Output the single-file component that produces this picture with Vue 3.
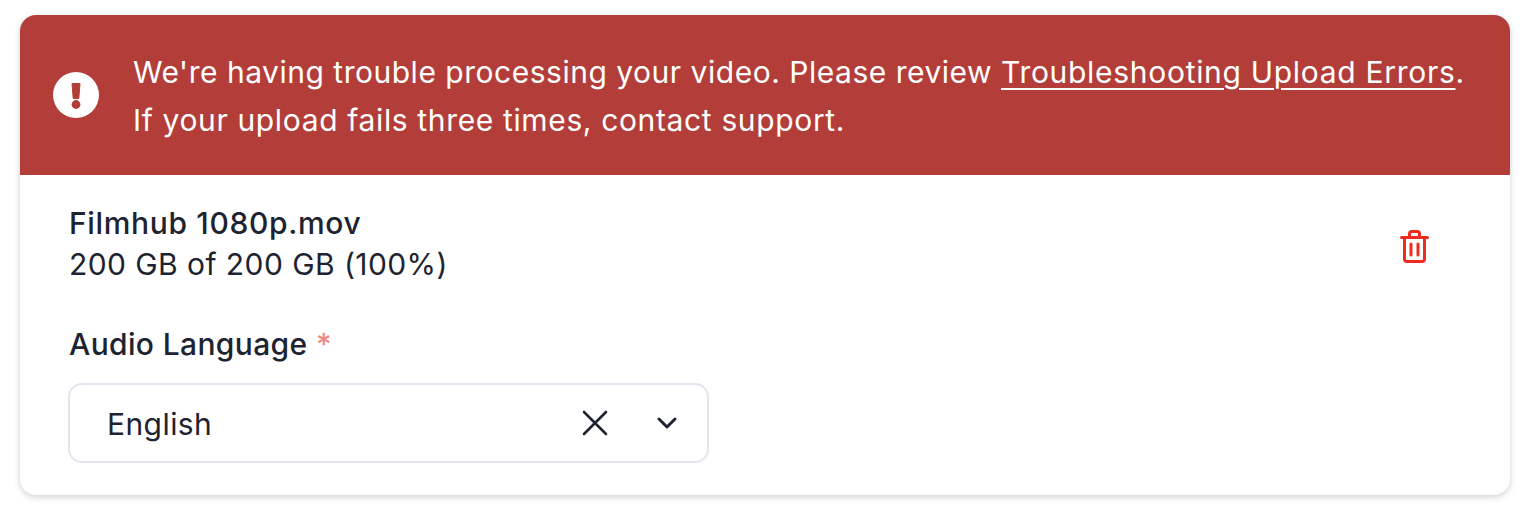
<template>
  <div class="page">
    <div class="card">
      <div class="alert">
        <svg class="alert-icon" viewBox="0 0 46 46">
          <circle cx="23" cy="23" r="23" fill="#fff" />
          <path d="M19 11.5h8l-1.2 15h-5.6z" fill="#b33e39" stroke="#b33e39" stroke-width="1" stroke-linejoin="round" />
          <circle cx="23" cy="32.5" r="4.4" fill="#b33e39" />
        </svg>
        <p class="alert-text">
          We're having trouble processing your video. Please review
          <a href="#" class="alert-link">Troubleshooting Upload Errors</a>.<br />
          <span class="alert-second">If your upload fails three times, contact support.</span>
        </p>
      </div>

      <div class="body">
        <div class="file-row">
          <div class="file-info">
            <div class="file-name">{{ fileName }}</div>
            <div class="file-size">{{ fileSize }}</div>
          </div>
          <button class="delete-btn" aria-label="Delete">
            <svg viewBox="0 0 29 33" width="29" height="33" fill="none" stroke="#ee2c1f" stroke-width="3" stroke-linejoin="round" stroke-linecap="round">
              <path d="M1.500 7.500h26" />
              <path d="M9.500 7.500V4c0-1.500.8-2.500 2.300-2.500h5.400c1.500 0 2.300 1 2.300 2.500v3.500" />
              <path d="M4.500 7.500v21.500c0 1.700.8 2.500 2.500 2.500h15c1.700 0 2.500-.8 2.500-2.500V7.500" />
              <path d="M11 14v11M18 14v11" />
            </svg>
          </button>
        </div>

        <label class="field-label">Audio Language <span class="required">*</span></label>
        <div class="select">
          <span class="select-value">{{ language }}</span>
          <svg class="clear-icon" viewBox="0 0 26 26" width="26" height="26" fill="none" stroke="#1d2330" stroke-width="2.600" stroke-linecap="round">
            <path d="M2 2l22 22M24 2L2 24" />
          </svg>
          <svg class="chevron-icon" viewBox="0 0 20 12" width="20" height="12" fill="none" stroke="#1d2330" stroke-width="3" stroke-linecap="round" stroke-linejoin="round">
            <path d="M2 2l8 8 8-8" />
          </svg>
        </div>
      </div>
    </div>
  </div>
</template>

<script setup>
import { ref } from 'vue'

const fileName = ref('Filmhub 1080p.mov')
const fileSize = ref('200 GB of 200 GB (100%)')
const language = ref('English')
</script>

<style>
html,
body {
  margin: 0;
  background: #fff;
}
</style>

<style scoped>
.page {
  box-sizing: border-box;
  min-height: 512px;
  padding: 15px 16px 0 20px;
  font-family: Inter, "Liberation Sans", sans-serif;
  color: #1d2330;
}

.card {
  background: #fff;
  border-radius: 16px;
  overflow: hidden;
  height: 480px;
  box-shadow: 0 2px 6px rgba(30, 40, 60, 0.22);
}

.alert {
  display: flex;
  align-items: center;
  height: 160px;
  padding-left: 33px;
  background: #b33e39;
  color: #fff;
  box-sizing: border-box;
}

.alert-icon {
  width: 46px;
  height: 46px;
  flex: none;
  margin-right: 34px;
}

.alert-text {
  margin: 0;
  padding-top: 1px;
  font-size: 30px;
  line-height: 48px;
  letter-spacing: 0.515px;
}

.alert-second {
  letter-spacing: 0.64px;
}

.alert-link {
  color: #fff;
  letter-spacing: 0.7px;
  text-decoration: underline;
  text-underline-offset: 5px;
  text-decoration-thickness: 2px;
}

.body {
  padding: 28px 0 0 49px;
}

.file-row {
  display: flex;
  justify-content: space-between;
  align-items: center;
  padding-right: 81px;
}

.file-name {
  font-size: 30px;
  line-height: 41px;
  font-weight: 500;
  letter-spacing: 0.66px;
}

.file-size {
  font-size: 30px;
  line-height: 40px;
  letter-spacing: 0.43px;
}

.delete-btn {
  display: flex;
  padding: 6px 0 0;
  border: 0;
  background: none;
  cursor: pointer;
}

.field-label {
  display: block;
  margin-top: 38px;
  font-size: 30px;
  line-height: 44px;
  font-weight: 500;
  letter-spacing: 0.36px;
}

.required {
  color: #ee8a86;
}

.select {
  display: flex;
  align-items: center;
  box-sizing: border-box;
  width: 641px;
  height: 80px;
  margin-top: 17px;
  margin-left: -1px;
  padding: 0 30px 0 37px;
  border: 2px solid #e2e6ee;
  border-radius: 14px;
  background: #fff;
}

.select-value {
  flex: 1;
  padding-top: 2px;
  font-size: 30px;
  letter-spacing: 0.43px;
}

.clear-icon {
  margin-right: 49px;
}
</style>
